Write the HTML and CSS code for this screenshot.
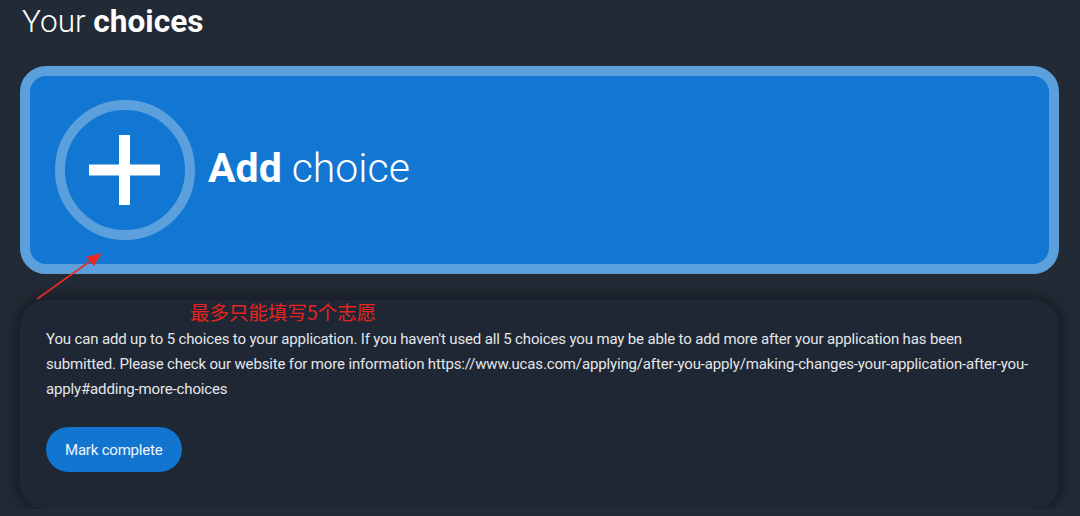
FILE: index.html
```html
<!DOCTYPE html>
<html>
<head>
  <meta name="viewport" content="width=device-width, initial-scale=1.0">
  <link rel="stylesheet" href="styles.css">
</head>
<body>
  <div class="page">
    <h1 class="title">Your <b>choices</b></h1>

    <div class="add_box">
      <div class="add_circle">
        <svg width="72" height="72" viewBox="0 0 72 72">
          <rect x="0" y="30.5" width="71" height="11" fill="#fff"/>
          <rect x="30" y="1" width="11" height="70" fill="#fff"/>
        </svg>
      </div>
      <div class="add_text"><b>Add</b> choice</div>
    </div>

    <div class="info_card">
      <p class="info_text">
        You can add up to 5 choices to your application. If you haven't used all 5 choices you may be able to add more after your application has been submitted. Please check our website for more information https://www.ucas.com/applying/after-you-apply/making-changes-your-application-after-you-apply#adding-more-choices
      </p>
      <button class="mark_button">Mark complete</button>
    </div>
  </div>

  <!-- annotation drawn over the screenshot -->
  <svg class="note_arrow" width="120" height="70" viewBox="0 0 120 70">
    <line x1="17" y1="49" x2="76" y2="7" stroke="#ea2a22" stroke-width="1.6"/>
    <polygon points="82,3 66,7 74,16" fill="#ea2a22"/>
  </svg>
  <div class="note_text">最多只能填写5个志愿</div>
</body>
</html>
```

FILE: styles.css
```css
body {
  margin: 0;
  background-color: #222a35;
  font-family: Roboto, "Noto Sans", sans-serif;
  color: #fff;
  position: relative;
}
.page {
  padding: 4px 21px 0 20px;
}
.title {
  margin: 0 0 26px 2px;
  font-size: 31.6px;
  line-height: 36px;
  font-weight: 300;
}
.title b {
  font-weight: 700;
}
.add_box {
  height: 188px;
  border: 10px solid #5ba0dd;
  border-radius: 26px;
  background-color: #1277d3;
  display: flex;
  align-items: center;
  padding-left: 25px;
}
.add_circle {
  width: 120px;
  height: 120px;
  border: 10px solid #5ba0dd;
  border-radius: 50%;
  display: flex;
  align-items: center;
  justify-content: center;
}
.add_text {
  margin-left: 13px;
  font-size: 41px;
  font-weight: 300;
  padding-bottom: 4px;
}
.add_text b {
  font-weight: 700;
}
.info_card {
  margin-top: 26px;
  background-color: #1f2734;
  border-radius: 26px;
  padding: 27px 26px 37px 26px;
  box-shadow: 0 0 14px 4px rgba(0,0,0,0.35);
}
.info_text {
  margin: 0 0 25px 0;
  font-size: 15px;
  line-height: 25px;
  letter-spacing: -0.15px;
  color: #e4e6ea;
}
.mark_button {
  height: 45px;
  padding: 0 19px;
  border: none;
  border-radius: 23px;
  background-color: #1276d1;
  color: #f2f4f8;
  font-family: Roboto, "Noto Sans", sans-serif;
  font-size: 15px;
  letter-spacing: -0.2px;
}
.note_arrow {
  position: absolute;
  left: 20px;
  top: 250px;
}
.note_text {
  position: absolute;
  left: 190px;
  top: 299px;
  font-family: "Noto Sans CJK SC", sans-serif;
  font-size: 19.5px;
  line-height: 26px;
  color: #e5231f;
}
```
